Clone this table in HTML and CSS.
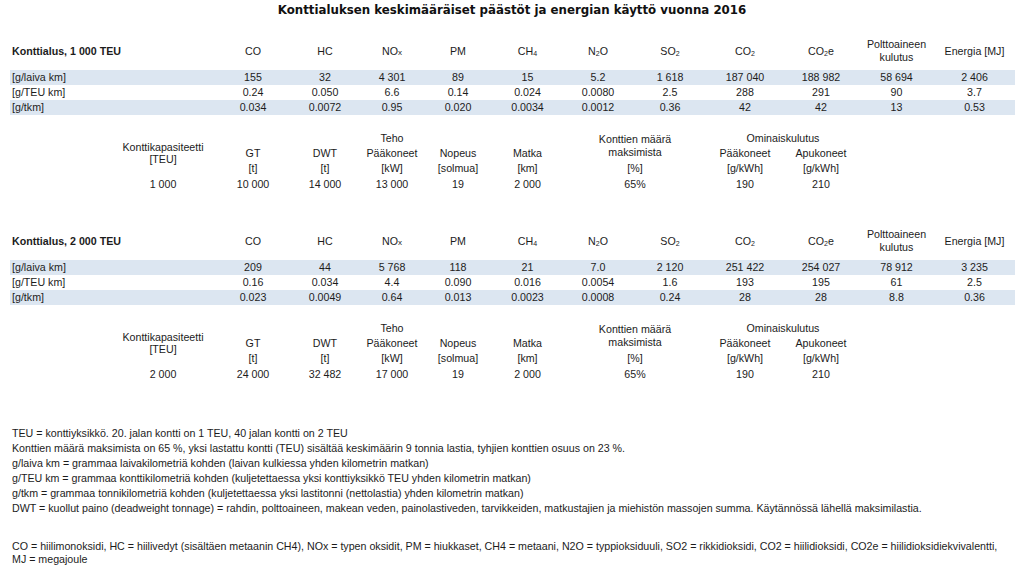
FILE: index.html
```html
<!DOCTYPE html>
<html lang="fi">
<head>
<meta charset="utf-8">
<title>Konttialuksen päästöt</title>
<link rel="stylesheet" href="styles.css">
</head>
<body>
<div class="title">Konttialuksen keskimääräiset päästöt ja energian käyttö vuonna 2016</div>

<section class="block">
  <div class="row head">
    <div class="lab bold">Konttialus, 1 000 TEU</div>
    <div>CO</div><div>HC</div><div>NO<span class="sx">x</span></div><div>PM</div>
    <div>CH<span class="sb">4</span></div><div>N<span class="sb">2</span>O</div><div>SO<span class="sb">2</span></div>
    <div>CO<span class="sb">2</span></div><div>CO<span class="sb">2</span>e</div>
    <div class="wrap">Polttoaineen<br>kulutus</div><div>Energia [MJ]</div>
  </div>
  <div class="row data band">
    <div class="lab">[g/laiva km]</div>
    <div>155</div><div>32</div><div>4 301</div><div>89</div><div>15</div><div>5.2</div><div>1 618</div><div>187 040</div><div>188 982</div><div>58 694</div><div>2 406</div>
  </div>
  <div class="row data">
    <div class="lab">[g/TEU km]</div>
    <div>0.24</div><div>0.050</div><div>6.6</div><div>0.14</div><div>0.024</div><div>0.0080</div><div>2.5</div><div>288</div><div>291</div><div>90</div><div>3.7</div>
  </div>
  <div class="row data band">
    <div class="lab">[g/tkm]</div>
    <div>0.034</div><div>0.0072</div><div>0.95</div><div>0.020</div><div>0.0034</div><div>0.0012</div><div>0.36</div><div>42</div><div>42</div><div>13</div><div>0.53</div>
  </div>
  <div class="row sub">
    <div class="kk">Konttikapasiteetti<br>[TEU]</div>
    <div class="c5 r1">Teho</div>
    <div class="km">Konttien määrä<br>maksimista</div>
    <div class="om">Ominaiskulutus</div>
    <div class="c3 r2">GT</div><div class="c4 r2">DWT</div><div class="c5 r2">Pääkoneet</div><div class="c6 r2">Nopeus</div><div class="c7 r2">Matka</div><div class="c10 r2">Pääkoneet</div><div class="c11 r2">Apukoneet</div>
    <div class="c3 r3">[t]</div><div class="c4 r3">[t]</div><div class="c5 r3">[kW]</div><div class="c6 r3">[solmua]</div><div class="c7 r3">[km]</div><div class="c89 r3">[%]</div><div class="c10 r3">[g/kWh]</div><div class="c11 r3">[g/kWh]</div>
    <div class="c2 r4">1 000</div><div class="c3 r4">10 000</div><div class="c4 r4">14 000</div><div class="c5 r4">13 000</div><div class="c6 r4">19</div><div class="c7 r4">2 000</div><div class="c89 r4">65%</div><div class="c10 r4">190</div><div class="c11 r4">210</div>
  </div>
</section>

<section class="block second">
  <div class="row head">
    <div class="lab bold">Konttialus, 2 000 TEU</div>
    <div>CO</div><div>HC</div><div>NO<span class="sx">x</span></div><div>PM</div>
    <div>CH<span class="sb">4</span></div><div>N<span class="sb">2</span>O</div><div>SO<span class="sb">2</span></div>
    <div>CO<span class="sb">2</span></div><div>CO<span class="sb">2</span>e</div>
    <div class="wrap">Polttoaineen<br>kulutus</div><div>Energia [MJ]</div>
  </div>
  <div class="row data band">
    <div class="lab">[g/laiva km]</div>
    <div>209</div><div>44</div><div>5 768</div><div>118</div><div>21</div><div>7.0</div><div>2 120</div><div>251 422</div><div>254 027</div><div>78 912</div><div>3 235</div>
  </div>
  <div class="row data">
    <div class="lab">[g/TEU km]</div>
    <div>0.16</div><div>0.034</div><div>4.4</div><div>0.090</div><div>0.016</div><div>0.0054</div><div>1.6</div><div>193</div><div>195</div><div>61</div><div>2.5</div>
  </div>
  <div class="row data band">
    <div class="lab">[g/tkm]</div>
    <div>0.023</div><div>0.0049</div><div>0.64</div><div>0.013</div><div>0.0023</div><div>0.0008</div><div>0.24</div><div>28</div><div>28</div><div>8.8</div><div>0.36</div>
  </div>
  <div class="row sub">
    <div class="kk">Konttikapasiteetti<br>[TEU]</div>
    <div class="c5 r1">Teho</div>
    <div class="km">Konttien määrä<br>maksimista</div>
    <div class="om">Ominaiskulutus</div>
    <div class="c3 r2">GT</div><div class="c4 r2">DWT</div><div class="c5 r2">Pääkoneet</div><div class="c6 r2">Nopeus</div><div class="c7 r2">Matka</div><div class="c10 r2">Pääkoneet</div><div class="c11 r2">Apukoneet</div>
    <div class="c3 r3">[t]</div><div class="c4 r3">[t]</div><div class="c5 r3">[kW]</div><div class="c6 r3">[solmua]</div><div class="c7 r3">[km]</div><div class="c89 r3">[%]</div><div class="c10 r3">[g/kWh]</div><div class="c11 r3">[g/kWh]</div>
    <div class="c2 r4">2 000</div><div class="c3 r4">24 000</div><div class="c4 r4">32 482</div><div class="c5 r4">17 000</div><div class="c6 r4">19</div><div class="c7 r4">2 000</div><div class="c89 r4">65%</div><div class="c10 r4">190</div><div class="c11 r4">210</div>
  </div>
</section>

<section class="notes">
  <p>TEU = konttiyksikkö. 20. jalan kontti on 1 TEU, 40 jalan kontti on 2 TEU</p>
  <p>Konttien määrä maksimista on 65 %, yksi lastattu kontti (TEU) sisältää keskimäärin 9 tonnia lastia, tyhjien konttien osuus on 23 %.</p>
  <p>g/laiva km = grammaa laivakilometriä kohden (laivan kulkiessa yhden kilometrin matkan)</p>
  <p>g/TEU km = grammaa konttikilometriä kohden (kuljetettaessa yksi konttiyksikkö TEU yhden kilometrin matkan)</p>
  <p>g/tkm = grammaa tonnikilometriä kohden (kuljetettaessa yksi lastitonni (nettolastia) yhden kilometrin matkan)</p>
  <p>DWT = kuollut paino (deadweight tonnage) = rahdin, polttoaineen, makean veden, painolastiveden, tarvikkeiden, matkustajien ja miehistön massojen summa. Käytännössä lähellä maksimilastia.</p>
  <p class="abbr">CO = hiilimonoksidi, HC = hiilivedyt (sisältäen metaanin CH4), NOx = typen oksidit, PM = hiukkaset, CH4 = metaani, N2O = typpioksiduuli, SO2 = rikkidioksidi, CO2 = hiilidioksidi, CO2e = hiilidioksidiekvivalentti,<br>MJ = megajoule</p>
</section>
</body>
</html>
```

FILE: styles.css
```css
html, body {
  margin: 0;
  padding: 0;
  background: #ffffff;
}

body {
  width: 1024px;
  font-family: "Liberation Sans", Arial, sans-serif;
  font-size: 10.67px;
  color: #1c1c1c;
}

.title {
  height: 20px;
  line-height: 20px;
  text-align: center;
  font-family: "DejaVu Sans", Verdana, sans-serif;
  font-weight: bold;
  font-size: 11.8px;
  color: #111111;
}

.block {
  padding-top: 14px;
}

.block.second {
  padding-top: 32px;
}

.row {
  display: grid;
  grid-template-columns: 100px 106px 74px 70px 64px 68px 71px 70px 74px 76px 76px 75px 81px;
  width: 1005px;
  margin-left: 10px;
  text-align: center;
  white-space: nowrap;
}

.row .lab {
  grid-column: span 2;
  text-align: left;
  padding-left: 2px;
}

.bold {
  font-weight: bold;
}

.head {
  height: 36px;
  padding-bottom: 3px;
  box-sizing: border-box;
  align-items: center;
}

.head .wrap {
  line-height: 12.5px;
}

.data {
  height: 15px;
  line-height: 15px;
}

.band {
  background: #dce6f1;
}

.sx {
  font-size: 8px;
}

.sb {
  font-size: 7px;
  position: relative;
  top: 1px;
}

.sub {
  margin-top: 16px;
  grid-template-rows: 15px 15px 15px 16px;
  line-height: 15px;
}

.sub > div {
  display: flex;
  align-items: center;
  justify-content: center;
}

.sub .kk {
  grid-column: 2;
  grid-row: 1 / 4;
  line-height: 11.5px;
  text-align: center;
}

.sub .km {
  grid-column: 8 / 10;
  grid-row: 1 / 3;
  line-height: 13px;
  text-align: center;
}

.sub .om {
  grid-column: 10 / 12;
  grid-row: 1;
}

.c2 { grid-column: 2; }
.c3 { grid-column: 3; }
.c4 { grid-column: 4; }
.c5 { grid-column: 5; }
.c6 { grid-column: 6; }
.c7 { grid-column: 7; }
.c89 { grid-column: 8 / 10; }
.c10 { grid-column: 10; }
.c11 { grid-column: 11; }

.r1 { grid-row: 1; }
.r2 { grid-row: 2; }
.r3 { grid-row: 3; }
.r4 { grid-row: 4; }

.notes {
  margin-top: 44px;
  padding-left: 12px;
}

.notes p {
  margin: 0;
  height: 15px;
  line-height: 15px;
  white-space: nowrap;
}

.notes p.abbr {
  height: auto;
  margin-top: 24px;
  line-height: 13px;
}
```
